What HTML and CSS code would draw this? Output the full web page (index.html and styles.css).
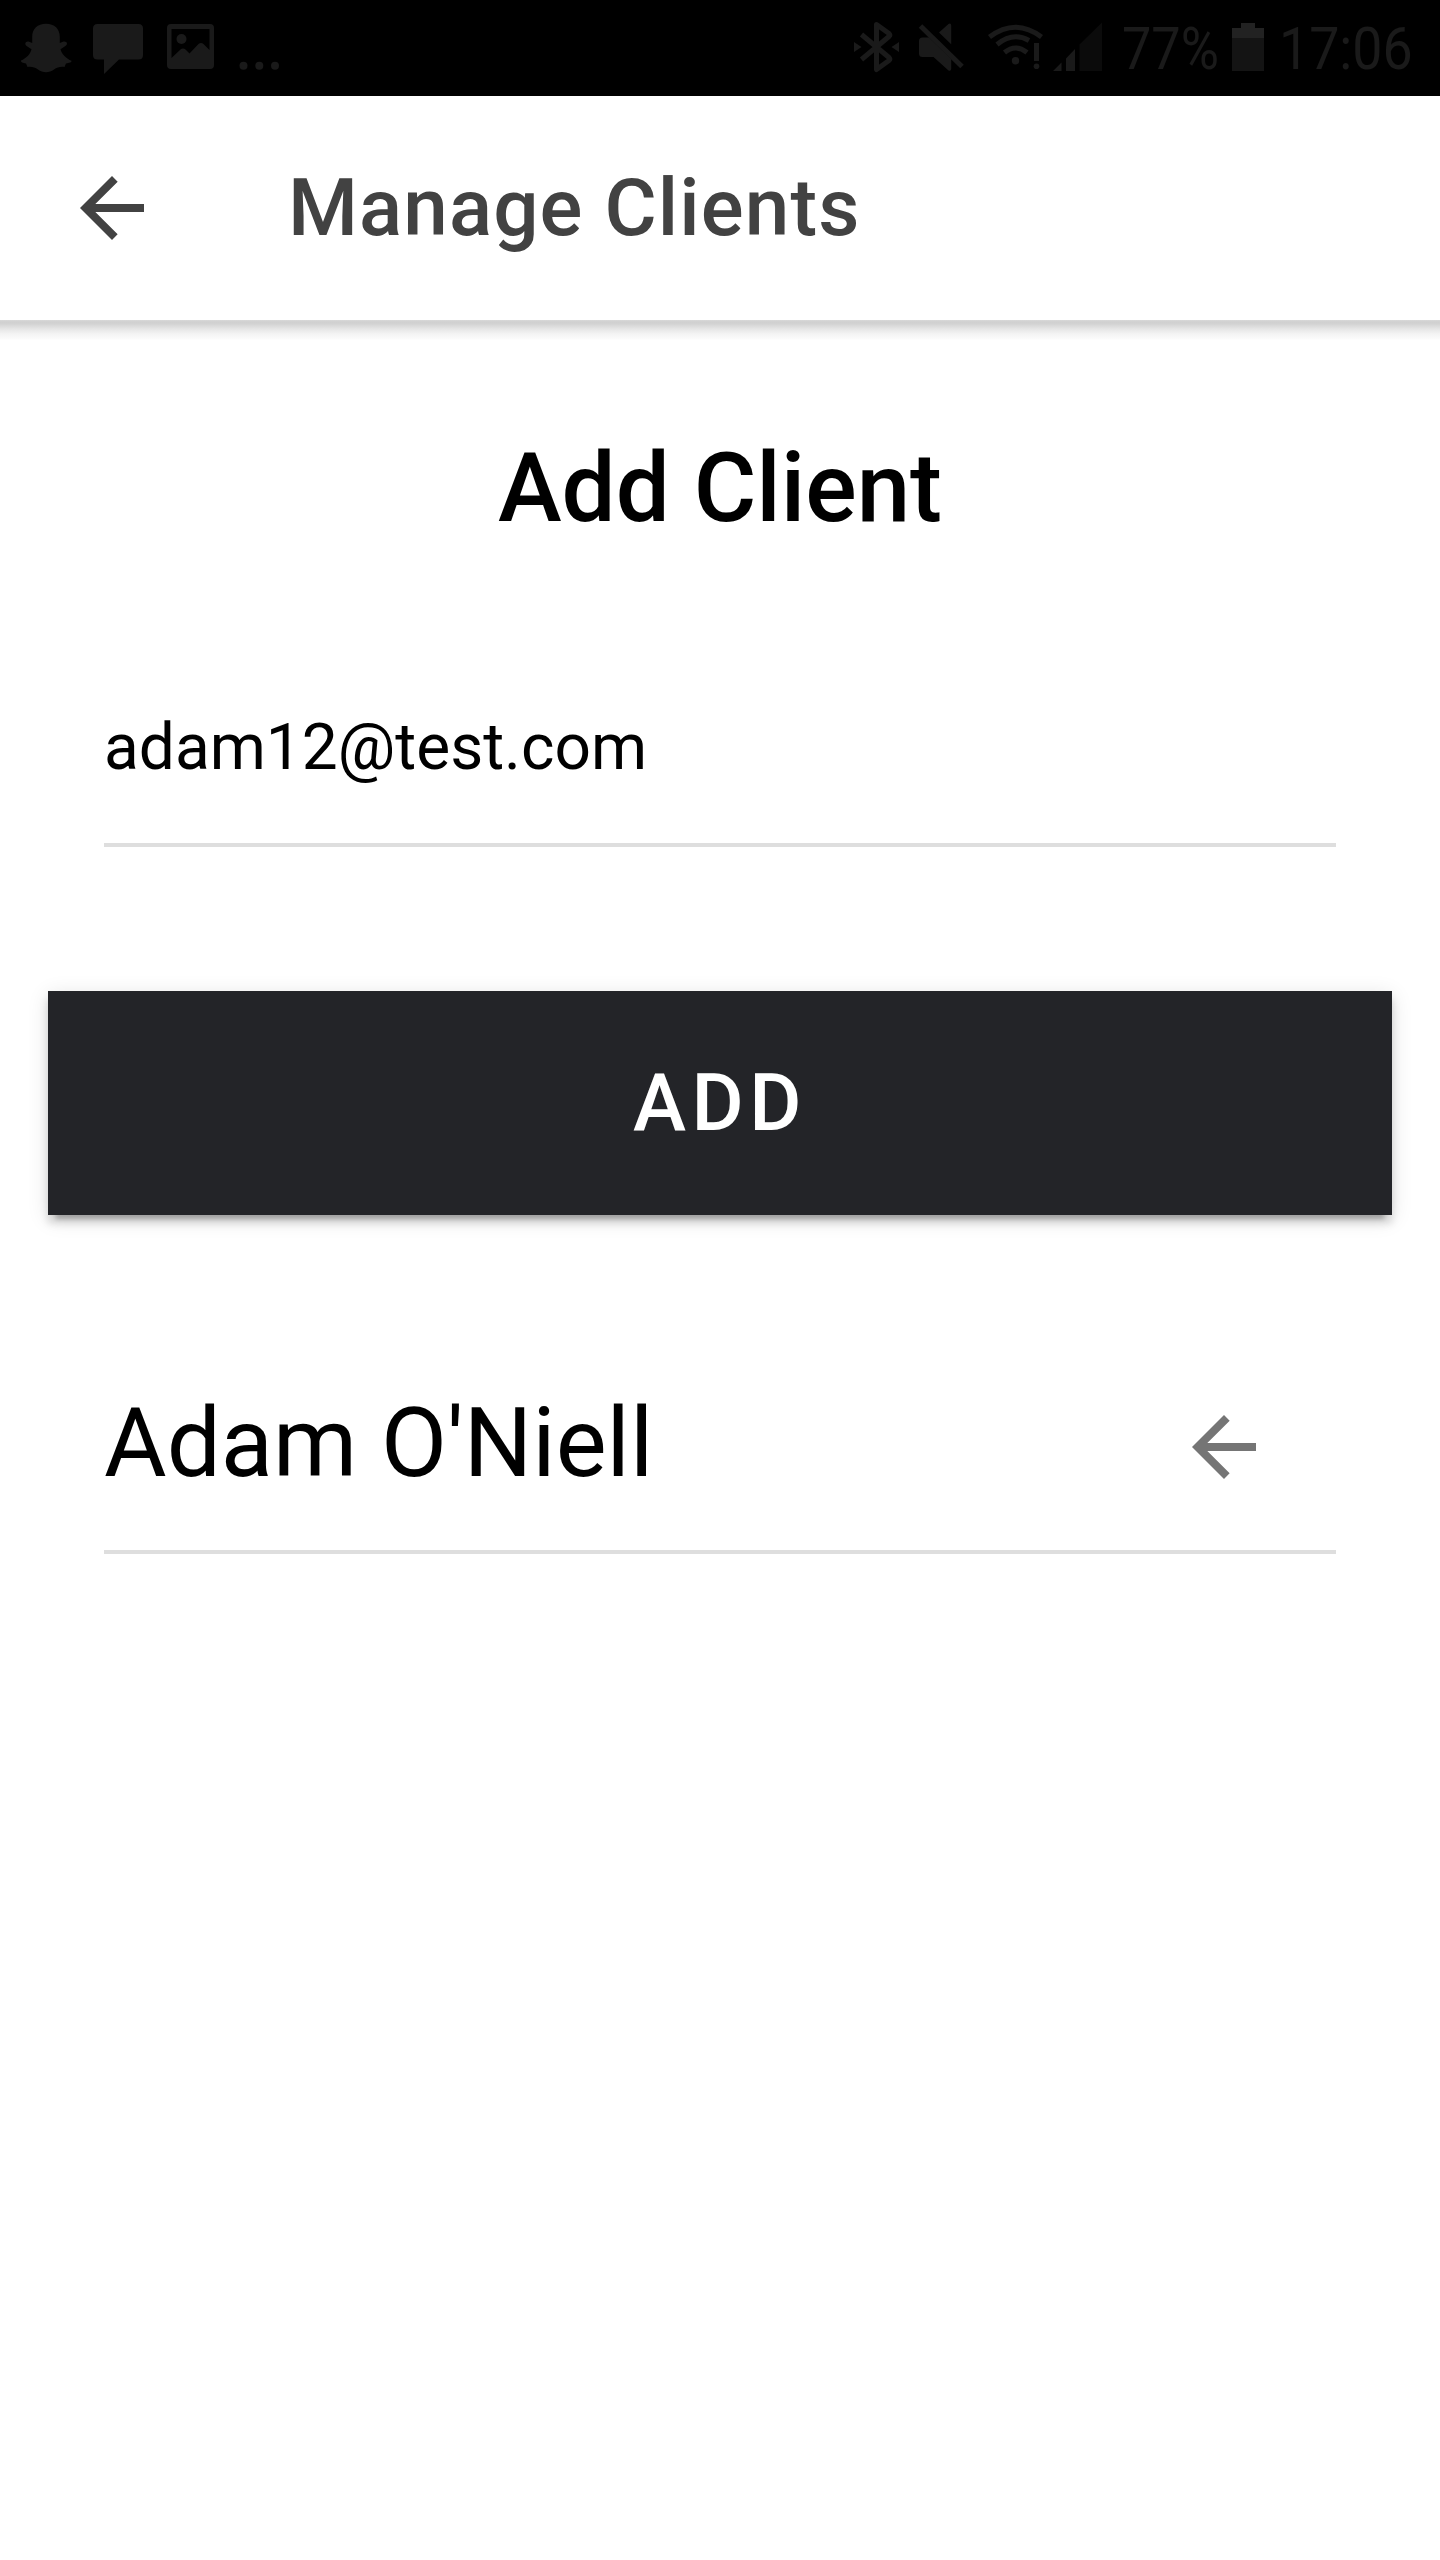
FILE: index.html
```html
<!DOCTYPE html>
<html lang="en">
<head>
<meta charset="utf-8">
<title>Manage Clients</title>
<link rel="stylesheet" href="styles.css">
</head>
<body>
<div class="status-bar">
  <div class="status-group">
    <svg width="52" height="96" viewBox="20 0 52 96"><path d="M46 23.800C37.500 23.800 32.200 29 32.200 37V43L28.500 41.600C25.500 41 24 44.500 27 46.300L31.500 49.200C30.500 54 26 58.500 21 60.500C20.500 62 23 63 26 63.500L27.500 67C32 66.500 35 67.500 38 69.500C43 73 49 73 54 69.500C57 67.500 60 66.500 64.500 67L66 63.500C69 63 72 62.500 71.500 60.800C66.500 58.500 61.500 54 60.500 49.200L65 46.300C68.500 44.500 67 41 63.500 41.600L59.800 43V37C59.800 29 54.500 23.800 46 23.800Z"/></svg>
    <svg class="chat-icon" width="50" height="96" viewBox="93 0 50 96"><path d="M97.500 24H138.500Q143 24 143 28.500V55Q143 59.500 138.500 59.500H119L104 74V59.500H97.500Q93 59.500 93 55V28.500Q93 24 97.500 24Z"/></svg>
    <svg class="photo-icon" width="47" height="96" viewBox="166.500 0 47 96"><path fill-rule="evenodd" d="M170.500 24H209.500Q213.500 24 213.500 28V65Q213.500 69 209.500 69H170.500Q166.500 69 166.500 65V28Q166.500 24 170.500 24ZM171 29V58L180 49.500Q182.500 47.500 185 49.500L189 53.500L198 44Q200.500 42 203 44L209 50V29Z"/><circle cx="181" cy="39" r="5"/></svg>
    <svg class="more-icon" width="42" height="96" viewBox="238 0 42 96"><circle cx="243.500" cy="65.700" r="4"/><circle cx="259.300" cy="65.700" r="4"/><circle cx="275" cy="65.700" r="4"/></svg>
  </div>
  <div class="status-group">
    <svg width="46" height="96" viewBox="854 0 46 96"><path class="stroke" d="M861.500 34.500L889 57.500Q890.500 59 889 60.500L876.500 69.500V24.500L889 33.500Q890.500 35 889 36.500L861.500 59.500"/><path d="M854 42L861.500 47L854 52ZM899 42L891.500 47L899 52Z"/></svg>
    <svg class="mute-icon" width="46" height="96" viewBox="918 0 46 96"><path d="M922.500 37.500H929L951.200 59V69Q951 71.500 948.500 70.500L933.500 57H922.500Q919 57 919 53.500V41Q919 37.500 922.500 37.500ZM939 32.500L948.500 24Q951 22.500 951.200 25.500V44.300Z"/><path class="slash" d="M920.500 26L962 66.500"/></svg>
    <svg class="wifi-icon" width="56" height="96" viewBox="988 0 56 96"><path class="arc" d="M989.500 37Q1015.500 17.500 1041.500 37M997 44.500Q1013 31.500 1029 40.500M1004.500 52.500Q1015.500 43.500 1027 52.500"/><circle cx="1015.500" cy="60.700" r="3.700"/><path d="M1034 43H1039V61H1034Z"/><circle cx="1036.500" cy="66.300" r="2.800"/></svg>
    <svg class="signal-icon" width="49" height="96" viewBox="1053 0 49 96"><path d="M1053 71L1061.500 62.500V71ZM1066 58.500L1075 49V71H1066Z"/><path class="dim" d="M1079.500 44.500L1102 22.500V71H1079.500Z"/></svg>
    <span class="status-text percent"><span>77%</span></span>
    <svg class="battery-icon" width="32" height="96" viewBox="1232 0 32 96"><path class="battery-top" d="M1241 23H1255V28H1264V38H1232V28H1241Z"/><path class="battery-fill" d="M1232 38H1264V71H1232Z"/></svg>
    <span class="status-text clock"><span>17:06</span></span>
  </div>
</div>
<header class="toolbar">
  <svg class="arrow" viewBox="0 0 24 24"><path d="M20 11H7.830l5.590-5.590L12 4l-8 8 8 8 1.410-1.410L7.830 13H20v-2z"/></svg>
  <div class="toolbar-title">Manage Clients</div>
</header>
<main>
  <h1>Add Client</h1>
  <div class="field">adam12@test.com</div>
  <button class="add-button" type="button">ADD</button>
  <div class="client">
    <span>Adam O'Niell</span>
    <svg class="arrow" viewBox="0 0 24 24"><path d="M20 11H7.830l5.590-5.590L12 4l-8 8 8 8 1.410-1.410L7.830 13H20v-2z"/></svg>
  </div>
</main>
</body>
</html>
```
FILE: styles.css
```css
* { box-sizing: border-box; }
body {
  margin: 0;
  min-height: 2560px;
  background: #fff;
  color: #000;
  font-family: Roboto, sans-serif;
}
svg { display: block; flex: none; }

.status-bar {
  display: flex;
  justify-content: space-between;
  height: 96px;
  padding: 0 28px 0 20px;
  background: #000;
  color: #1a1a1a;
  fill: #1a1a1a;
}
.status-group { display: flex; }
.chat-icon { margin-left: 21px; }
.photo-icon { margin-left: 23.500px; }
.more-icon { margin-left: 24.500px; }
.mute-icon { margin-left: 18px; }
.wifi-icon { margin-left: 24px; }
.signal-icon { margin-left: 9px; }
.battery-icon { margin-left: 13px; }
.stroke { fill: none; stroke: #1a1a1a; stroke-width: 5; stroke-linejoin: round; }
.slash { stroke: #1a1a1a; stroke-width: 5; }
.arc { fill: none; stroke: #1a1a1a; stroke-width: 5; }
.dim { fill: #0b0b0b; }
.battery-top { fill: #222; }
.battery-fill { fill: #141414; }
.status-text {
  display: block;
  font-size: 60px;
  line-height: 97px;
  white-space: nowrap;
}
.status-text span {
  display: block;
  width: max-content;
  transform: scaleX(0.870);
  transform-origin: 0 0;
}
.percent { width: 97px; margin-left: 20px; }
.clock { width: 133px; margin-left: 15px; }
.status-text.clock span { transform: scaleX(0.895); }

.toolbar {
  display: flex;
  align-items: center;
  height: 224px;
  padding-left: 64px;
  color: #424242;
}
.toolbar-title {
  margin-left: 128px;
  font-size: 80px;
  font-weight: 500;
  letter-spacing: 1.100px;
  line-height: 96px;
}
.arrow { width: 96px; height: 96px; fill: currentColor; }

main {
  display: flex;
  flex-direction: column;
  background: linear-gradient(#d9d9d9 0, #d0d0d0 2px, #d3d3d3 4px, #e6e6e6 9px, #f4f4f4 14px, #fbfbfb 19px, #fff 20px) no-repeat top / 100% 20px;
}
h1 {
  margin: 112px 0 0;
  font-size: 96px;
  font-weight: 500;
  line-height: 112px;
  text-align: center;
}
.field {
  height: 192px;
  margin: 111px 104px 0;
  border-bottom: 4px solid #dedede;
  font-size: 64px;
  line-height: 186px;
}
.add-button {
  height: 224px;
  margin: 144px 48px 0;
  border: 0;
  background: #232428;
  color: #fff;
  font: 500 80px/96px Roboto, sans-serif;
  letter-spacing: 5.500px;
  box-shadow: 0 12px 4px -8px rgba(0,0,0,.2), 0 8px 8px 0 rgba(0,0,0,.14), 0 4px 20px 0 rgba(0,0,0,.12);
}
.client {
  display: flex;
  justify-content: space-between;
  align-items: center;
  height: 215px;
  margin: 124px 104px 0;
  padding-right: 64px;
  border-bottom: 4px solid #dedede;
  font-size: 96px;
  line-height: 112px;
}
.client span { margin-bottom: 3px; }
.client .arrow { margin-top: 5px; color: #757575; }
```
